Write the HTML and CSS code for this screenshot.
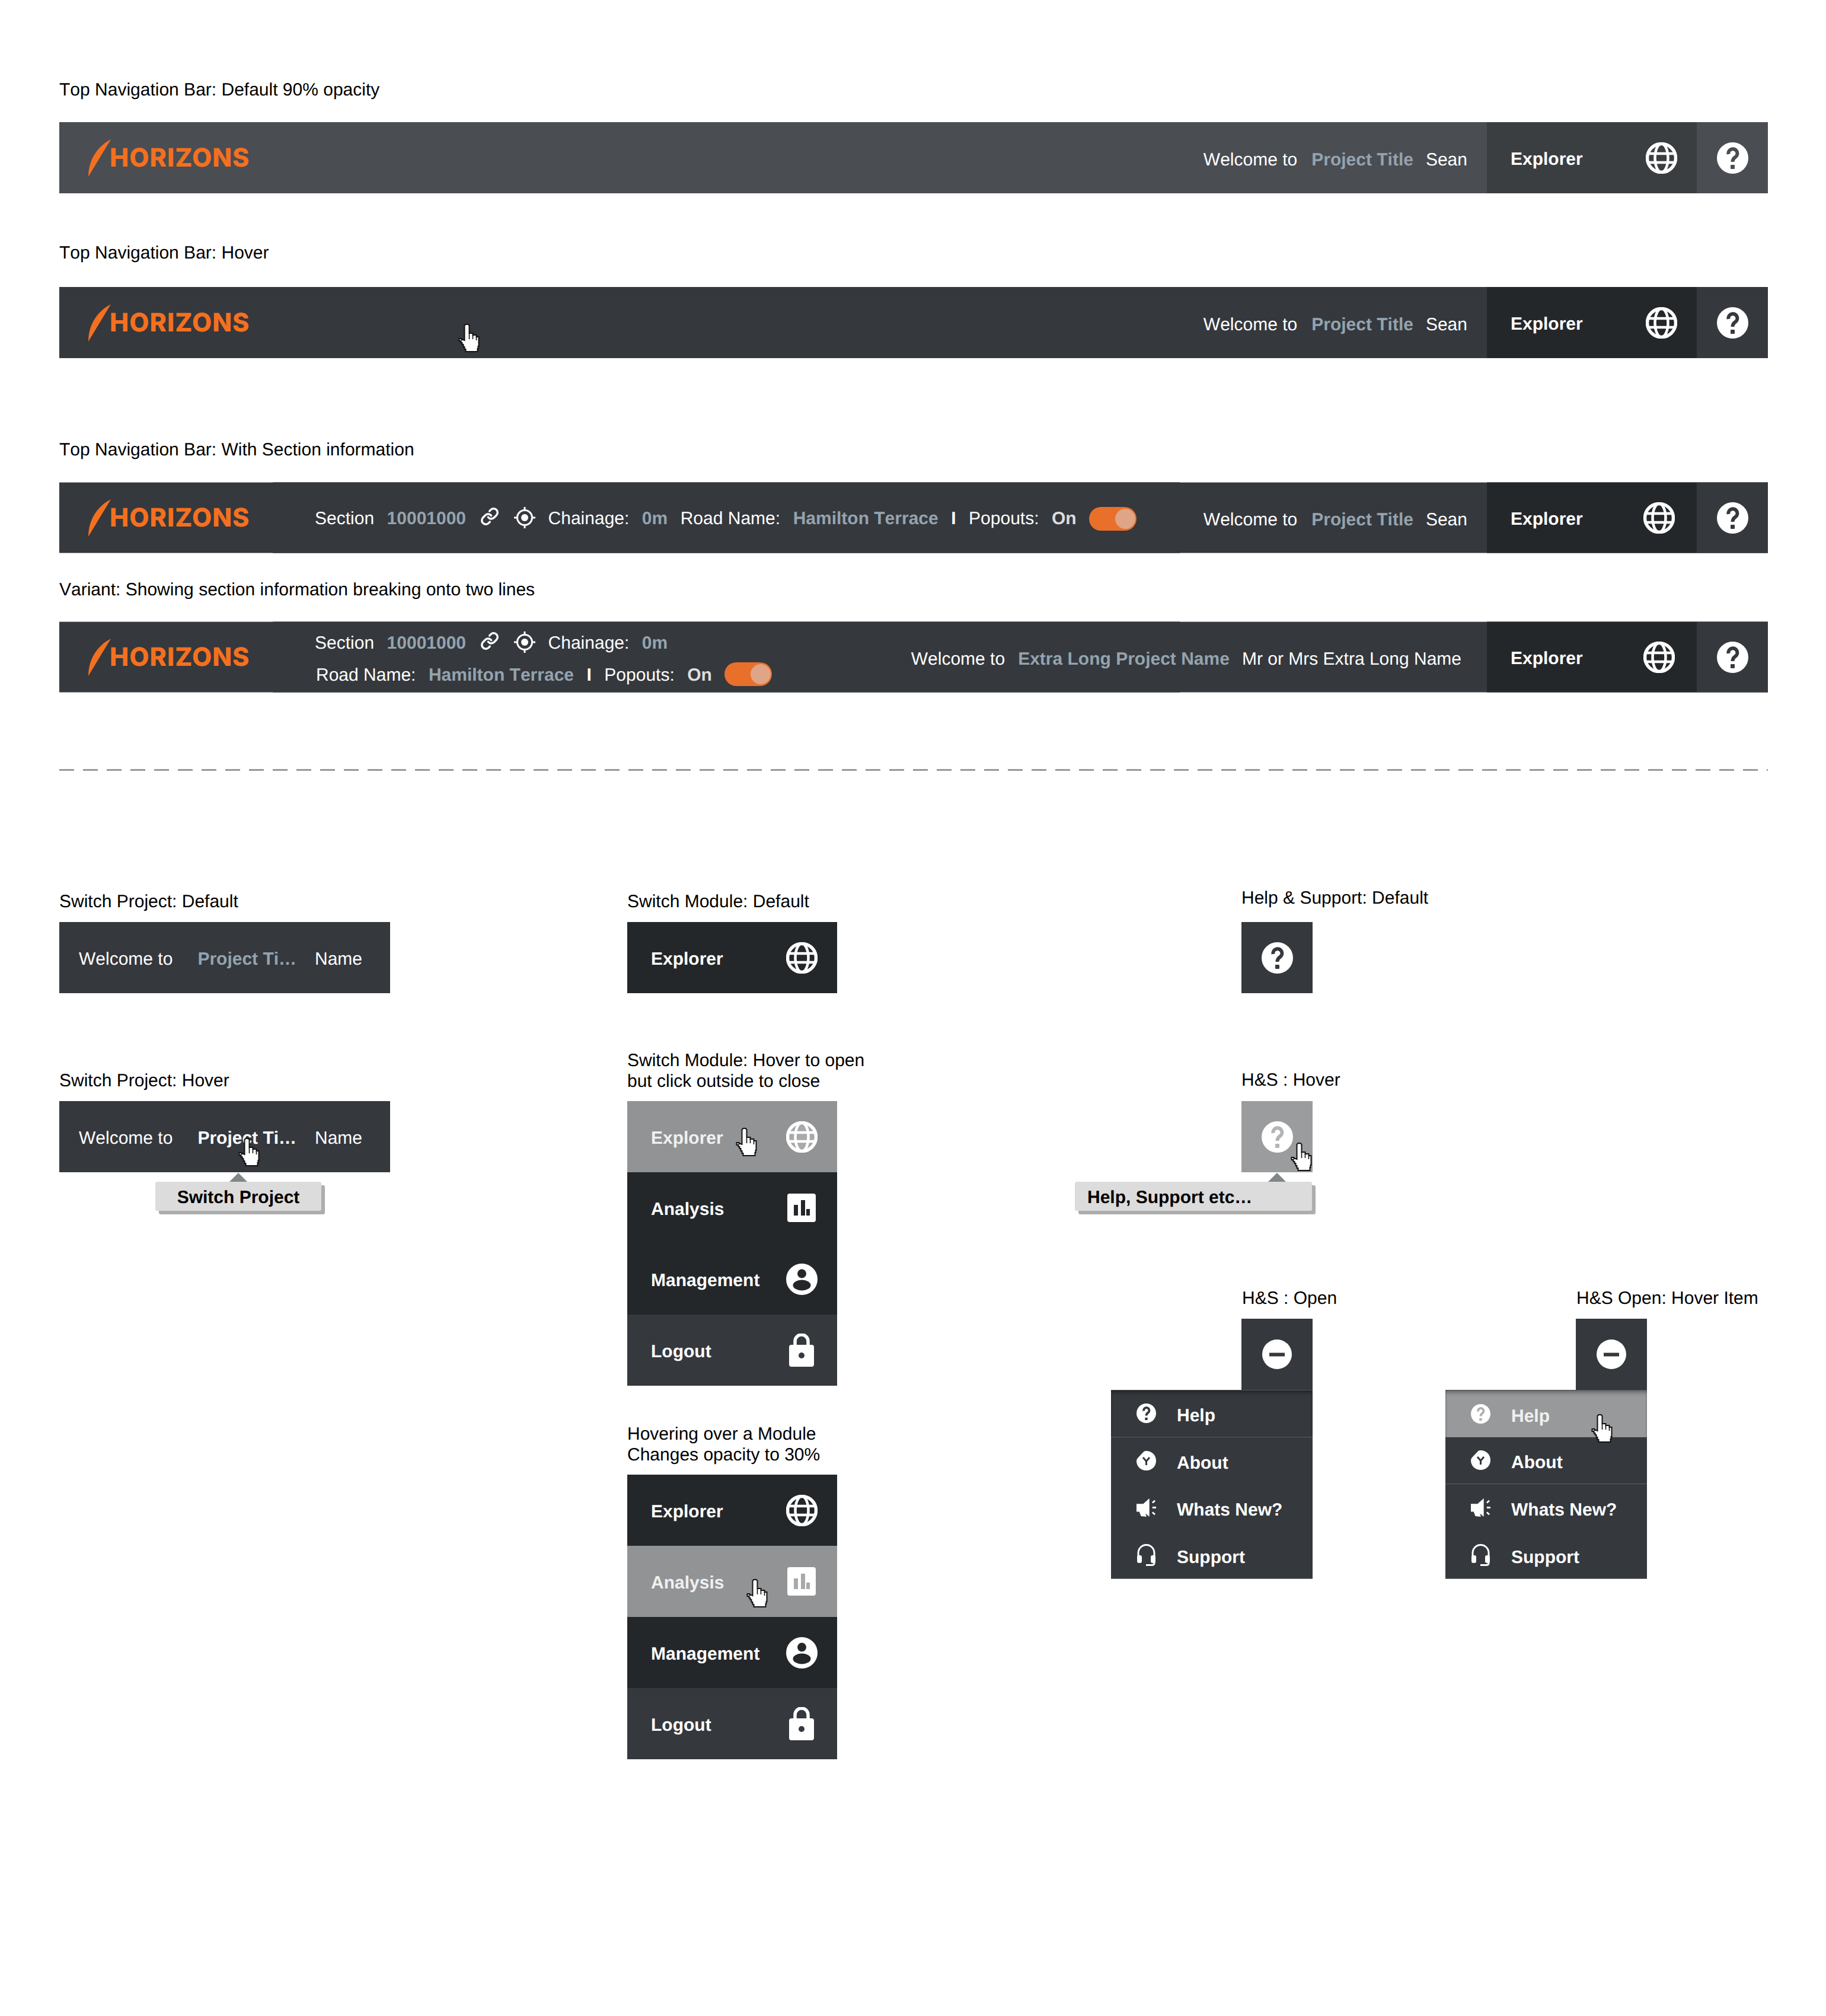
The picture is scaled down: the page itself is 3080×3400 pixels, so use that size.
FILE: index.html
```html
<!DOCTYPE html>
<html lang="en">
<head>
  <meta charset="UTF-8">
  <title>Top Navigation Bar</title>
  <link rel="stylesheet" href="styles.css">
</head>
<body>
  <!-- Shared icons -->
  <svg class="icon-defs" aria-hidden="true">
    <symbol id="i-swoosh" viewBox="0 0 38 63">
      <path d="M38 0C15 12 0 35 0 63Z"/>
    </symbol>
    <symbol id="i-globe" viewBox="0 0 53 53">
      <circle class="hole" cx="26.5" cy="26.5" r="24"/>
      <g class="line line--grid">
        <ellipse cx="26.5" cy="26.5" rx="11" ry="24"/>
        <path d="M4 19H49M4 34H49"/>
      </g>
      <circle class="line" cx="26.5" cy="26.5" r="24"/>
    </symbol>
    <symbol id="i-help" viewBox="0 0 53 53">
      <circle class="solid" cx="26.5" cy="26.5" r="26.5"/>
      <path class="hole-line" d="M19.5 20A7.5 7.5 0 1 1 31 25C28 27 26.5 29 26.5 33"/>
      <rect class="hole" x="23" y="38" width="7" height="7" rx="1"/>
    </symbol>
    <symbol id="i-minus" viewBox="0 0 50 50">
      <circle class="solid" cx="25" cy="25" r="25"/>
      <rect class="hole" x="12" y="22.5" width="26" height="6"/>
    </symbol>
    <symbol id="i-chart" viewBox="0 0 48 48">
      <rect class="solid" width="48" height="48" rx="4"/>
      <rect class="hole" x="11" y="19" width="7" height="18"/>
      <rect class="hole" x="23" y="11" width="7" height="26"/>
      <rect class="hole" x="32" y="26" width="6" height="11"/>
    </symbol>
    <symbol id="i-person" viewBox="0 0 53 53">
      <circle class="solid" cx="26.5" cy="26.5" r="26.5"/>
      <circle class="hole" cx="26.5" cy="17" r="7.5"/>
      <ellipse class="hole" cx="26.5" cy="36.5" rx="15" ry="9"/>
    </symbol>
    <symbol id="i-lock" viewBox="0 0 42 56">
      <path class="line" d="M10 22V13A11 11 0 0 1 32 13V22"/>
      <rect class="solid" y="19" width="42" height="37" rx="4"/>
      <circle class="hole" cx="21" cy="37" r="5"/>
    </symbol>
    <symbol id="i-link" viewBox="0 0 24 24">
      <path class="line line--link" d="M10 13a5 5 0 0 0 7.54.54l3-3a5 5 0 0 0-7.07-7.07l-1.72 1.71"/>
      <path class="line line--link" d="M14 11a5 5 0 0 0-7.54-.54l-3 3a5 5 0 0 0 7.07 7.07l1.71-1.71"/>
    </symbol>
    <symbol id="i-target" viewBox="0 0 36 36">
      <circle class="line line--ring" cx="18" cy="18" r="12.5"/>
      <circle class="solid" cx="18" cy="18" r="6"/>
      <path class="line line--ring" d="M18 0V6M18 30V36M0 18H6M30 18H36"/>
    </symbol>
    <symbol id="i-about" viewBox="0 0 33 33">
      <path class="solid" d="M16 0C26 0 33 7 33 16.5C33 26 26 33 16.5 33C7 33 0 26 0 17C0 15 1 13 3 11L12 1.500C13 .5 15 0 16 0Z"/>
      <path class="hole-line hole-line--thin" d="M11 11L16.500 17.500L22 11M16.500 17.500V24"/>
    </symbol>
    <symbol id="i-megaphone" viewBox="0 0 35 33">
      <path class="solid" d="M0 10H12L23 0V33L16 27L18 33L8 32L5 24H0Z"/>
      <path class="line line--ring" d="M28.500 8L33 4M28.500 16.500H35M28.500 25L33 29"/>
    </symbol>
    <symbol id="i-headset" viewBox="0 0 33 37">
      <path class="line line--ring" d="M3 22V15A13.500 13.500 0 0 1 30 15V32C30 34.500 28 35.500 26 35.500H16"/>
      <rect class="solid" x="1" y="19" width="8" height="13" rx="3"/>
      <rect class="solid" x="24" y="19" width="8" height="13" rx="3"/>
    </symbol>
    <symbol id="i-hand" viewBox="0 0 18 24">
      <path class="hand" d="M6 .5H8L9 1.500V8H12V9.500H15V11H17V19H16.500V21H16V23.500H6V21.500H5V19.500H4V17.500H3V16H2V14.500H.5V12.500H2.500V13.500H4L5 14V1.500Z"/>
      <path class="hand hand--lines" d="M9 8V13M12 9.500V13M15 11V14"/>
    </symbol>
  </svg>

  <div class="board">
    <!-- Top navigation variants -->
    <p class="label label--first">Top Navigation Bar: Default 90% opacity</p>
    <div class="bar bar--default">
      <div class="logo"><svg class="swoosh"><use href="#i-swoosh"/></svg><span class="logo-text">HORIZONS</span></div>
      <div class="welcome">
        <span>Welcome to</span><strong class="accent">Project Title</strong><span>Sean</span>
      </div>
      <div class="module">
        <strong>Explorer</strong>
        <svg class="icon"><use href="#i-globe"/></svg>
      </div>
      <div class="help"><svg class="icon"><use href="#i-help"/></svg></div>
    </div>

    <p class="label label--second">Top Navigation Bar: Hover</p>
    <div class="bar">
      <div class="logo"><svg class="swoosh"><use href="#i-swoosh"/></svg><span class="logo-text">HORIZONS</span></div>
      <div class="welcome">
        <span>Welcome to</span><strong class="accent">Project Title</strong><span>Sean</span>
      </div>
      <div class="module">
        <strong>Explorer</strong>
        <svg class="icon"><use href="#i-globe"/></svg>
      </div>
      <div class="help"><svg class="icon"><use href="#i-help"/></svg></div>
      <svg class="cursor cursor--bar"><use href="#i-hand"/></svg>
    </div>

    <p class="label label--third">Top Navigation Bar: With Section information</p>
    <div class="bar bar--edged">
      <div class="logo"><svg class="swoosh"><use href="#i-swoosh"/></svg><span class="logo-text">HORIZONS</span></div>
      <div class="section-info">
        <div class="section-row">
          <span>Section</span><strong class="accent">10001000</strong>
          <svg class="link-icon"><use href="#i-link"/></svg>
          <svg class="target-icon"><use href="#i-target"/></svg>
          <span>Chainage:</span><strong class="accent">0m</strong>
          <span>Road Name:</span><strong class="accent">Hamilton Terrace</strong>
          <strong class="divider">I</strong>
          <span>Popouts:</span><strong class="state">On</strong>
          <div class="toggle toggle--single"><div class="toggle-knob"></div></div>
        </div>
      </div>
      <div class="welcome">
        <span>Welcome to</span><strong class="accent">Project Title</strong><span>Sean</span>
      </div>
      <div class="module module--tight">
        <strong>Explorer</strong>
        <svg class="icon"><use href="#i-globe"/></svg>
      </div>
      <div class="help"><svg class="icon"><use href="#i-help"/></svg></div>
    </div>

    <p class="label label--fourth">Variant: Showing section information breaking onto two lines</p>
    <div class="bar bar--edged">
      <div class="logo"><svg class="swoosh"><use href="#i-swoosh"/></svg><span class="logo-text">HORIZONS</span></div>
      <div class="section-info section-info--wrap">
        <div class="section-row">
          <span>Section</span><strong class="accent">10001000</strong>
          <svg class="link-icon"><use href="#i-link"/></svg>
          <svg class="target-icon"><use href="#i-target"/></svg>
          <span>Chainage:</span><strong class="accent">0m</strong>
        </div>
        <div class="section-row section-row--second">
          <span>Road Name:</span><strong class="accent">Hamilton Terrace</strong>
          <strong class="divider">I</strong>
          <span>Popouts:</span><strong class="state">On</strong>
          <div class="toggle"><div class="toggle-knob"></div></div>
        </div>
      </div>
      <div class="welcome welcome--long">
        <span>Welcome to</span><strong class="accent">Extra Long Project Name</strong><span>Mr or Mrs Extra Long Name</span>
      </div>
      <div class="module module--tight">
        <strong>Explorer</strong>
        <svg class="icon"><use href="#i-globe"/></svg>
      </div>
      <div class="help"><svg class="icon"><use href="#i-help"/></svg></div>
    </div>

    <div class="dashed"></div>

    <!-- Component states -->
    <div class="states">
      <div class="col col--project">
        <p class="label label--col">Switch Project: Default</p>
        <div class="project-bar">
          <span>Welcome to</span><strong class="accent project-name">Project Ti…</strong><span class="project-user">Name</span>
        </div>

        <p class="label label--project-hover">Switch Project: Hover</p>
        <div class="project-bar">
          <span>Welcome to</span><strong class="project-name">Project Ti…</strong><span class="project-user">Name</span>
          <svg class="cursor cursor--project"><use href="#i-hand"/></svg>
          <div class="tip tip--project"><span class="tip-arrow"></span>Switch Project</div>
        </div>
      </div>

      <div class="col col--module">
        <p class="label label--col">Switch Module: Default</p>
        <div class="module module--solo">
          <strong>Explorer</strong>
          <svg class="icon"><use href="#i-globe"/></svg>
        </div>

        <p class="label label--module-open">Switch Module: Hover to open<br>but click outside to close</p>
        <div class="module-list">
          <div class="module module--solo module--hover">
            <strong>Explorer</strong>
            <svg class="icon"><use href="#i-globe"/></svg>
            <svg class="cursor cursor--explorer"><use href="#i-hand"/></svg>
          </div>
          <div class="module module--solo">
            <strong>Analysis</strong>
            <svg class="icon icon--chart"><use href="#i-chart"/></svg>
          </div>
          <div class="module module--solo">
            <strong>Management</strong>
            <svg class="icon"><use href="#i-person"/></svg>
          </div>
          <div class="module module--solo module--logout">
            <strong>Logout</strong>
            <svg class="icon icon--lock"><use href="#i-lock"/></svg>
          </div>
        </div>

        <p class="label label--module-item">Hovering over a Module<br>Changes opacity to 30%</p>
        <div class="module-list">
          <div class="module module--solo">
            <strong>Explorer</strong>
            <svg class="icon"><use href="#i-globe"/></svg>
          </div>
          <div class="module module--solo module--hover">
            <strong>Analysis</strong>
            <svg class="icon icon--chart"><use href="#i-chart"/></svg>
            <svg class="cursor cursor--analysis"><use href="#i-hand"/></svg>
          </div>
          <div class="module module--solo">
            <strong>Management</strong>
            <svg class="icon"><use href="#i-person"/></svg>
          </div>
          <div class="module module--solo module--logout">
            <strong>Logout</strong>
            <svg class="icon icon--lock"><use href="#i-lock"/></svg>
          </div>
        </div>
      </div>

      <div class="col col--help">
        <div class="help-stack">
          <p class="label label--help-default">Help &amp; Support: Default</p>
          <div class="help help--solo"><svg class="icon"><use href="#i-help"/></svg></div>

          <p class="label label--help-hover">H&amp;S : Hover</p>
          <div class="help help--solo help--hover">
            <svg class="icon"><use href="#i-help"/></svg>
            <svg class="cursor cursor--help"><use href="#i-hand"/></svg>
            <div class="tip tip--help"><span class="tip-arrow"></span>Help, Support etc…</div>
          </div>
        </div>

        <div class="help-open-row">
          <div class="help-open">
            <p class="label label--open">H&amp;S : Open</p>
            <div class="help help--solo help--open"><svg class="icon icon--minus"><use href="#i-minus"/></svg></div>
            <div class="menu">
              <div class="menu-item menu-item--first menu-item--ruled"><svg class="menu-icon"><use href="#i-help"/></svg><strong>Help</strong></div>
              <div class="menu-item"><svg class="menu-icon"><use href="#i-about"/></svg><strong>About</strong></div>
              <div class="menu-item"><svg class="menu-icon"><use href="#i-megaphone"/></svg><strong>Whats New?</strong></div>
              <div class="menu-item"><svg class="menu-icon menu-icon--tall"><use href="#i-headset"/></svg><strong>Support</strong></div>
            </div>
          </div>

          <div class="help-open">
            <p class="label label--open">H&amp;S Open: Hover Item</p>
            <div class="help help--solo help--open"><svg class="icon icon--minus"><use href="#i-minus"/></svg></div>
            <div class="menu">
              <div class="menu-item menu-item--first menu-item--hover"><svg class="menu-icon"><use href="#i-help"/></svg><strong>Help</strong></div>
              <div class="menu-item menu-item--ruled"><svg class="menu-icon"><use href="#i-about"/></svg><strong>About</strong></div>
              <div class="menu-item"><svg class="menu-icon"><use href="#i-megaphone"/></svg><strong>Whats New?</strong></div>
              <div class="menu-item"><svg class="menu-icon menu-icon--tall"><use href="#i-headset"/></svg><strong>Support</strong></div>
              <svg class="cursor cursor--menu"><use href="#i-hand"/></svg>
            </div>
          </div>
        </div>
      </div>
    </div>
  </div>
</body>
</html>
```

FILE: styles.css
```css
/* Specimen board for the top navigation */
html, body {
  margin: 0;
  padding: 0;
  background: #fff;
}
body {
  font-family: "Liberation Sans", Arial, sans-serif;
  font-size: 30px;
  line-height: 35px;
  color: #000;
  font-kerning: none;
  text-rendering: geometricPrecision;
  --hole: #35383d;
}
.board {
  width: 2882px;
  height: 3400px;
  padding-left: 100px;
  overflow: hidden;
}
.icon-defs {
  position: absolute;
  width: 0;
  height: 0;
}

/* Icon parts, styled through the <use> tree */
.solid { fill: #fff; }
.hole { fill: var(--hole); }
.hole-line {
  fill: none;
  stroke: var(--hole);
  stroke-width: 6;
}
.hole-line--thin { stroke-width: 3; }
.line {
  fill: none;
  stroke: #fff;
  stroke-width: 5.5;
}
.line--grid { stroke-width: 4.5; }
.line--link { stroke-width: 2.6; stroke-linecap: round; }
.line--ring { stroke-width: 3; }
.hand {
  fill: #fff;
  stroke: #111;
  stroke-width: 1;
}
.hand--lines { fill: none; stroke-width: .8; }

/* Labels */
.label {
  margin: 0;
  padding-top: 1.5px;
  white-space: nowrap;
}
.label--first { padding-top: 133.5px; margin-bottom: 37.5px; }
.label--second { margin-top: 81px; margin-bottom: 40.5px; }
.label--third { margin-top: 135px; margin-bottom: 37.5px; }
.label--fourth { margin-top: 42px; margin-bottom: 36.5px; }
.label--col { margin-top: 6px; margin-bottom: 17.5px; }
.label--project-hover { margin-top: 128px; margin-bottom: 17.5px; }
.label--module-open { margin-top: 94px; margin-bottom: 16.5px; }
.label--module-item { margin-top: 62px; margin-bottom: 16.5px; }
.label--help-default { margin-bottom: 23.5px; }
.label--help-hover { margin-top: 127px; margin-bottom: 18.5px; }
.label--open { margin-left: 221px; margin-bottom: 17.5px; }

/* Navigation bar */
.bar {
  position: relative;
  display: flex;
  align-items: center;
  height: 120px;
  background: #35383d;
  color: #fff;
  --hole: #35383d;
}
.bar--default {
  background: #4a4d52;
  --hole: #4a4d52;
}
.bar--default .module {
  background: #3b3e41;
  --hole: #3b3e41;
}
.bar--edged {
  box-sizing: border-box;
  background:
    linear-gradient(to right, #b5b5b5 360px, #6e6e6e 360px, #6e6e6e 1890px, #b5b5b5 1890px, #b5b5b5 2408px, #6e6e6e 2408px) top / 100% 1px no-repeat,
    linear-gradient(to right, #8a8a8a 360px, #4a4c50 360px, #4a4c50 1890px, #8a8a8a 1890px, #8a8a8a 2408px, #4a4c50 2408px) bottom / 100% 1px no-repeat,
    #35383d;
}
.bar--edged .module,
.bar--edged .help {
  align-self: stretch;
  height: auto;
  border-top: 1px solid #6e6e6e;
  border-bottom: 1px solid #4a4c50;
}
.logo {
  display: flex;
  align-items: center;
  padding-left: 49px;
}
.swoosh {
  width: 38px;
  height: 63px;
  fill: #f4701f;
}
.logo-text {
  margin-left: -2px;
  color: #f4701f;
  font-family: Inter, "Liberation Sans", sans-serif;
  font-size: 43px;
  font-weight: 800;
  font-kerning: normal;
  letter-spacing: 1px;
  line-height: 43px;
}
.accent { color: #94a3ae; }
.welcome {
  display: flex;
  gap: 21px;
  margin-left: auto;
  padding: 6px 33px 0 0;
  white-space: nowrap;
}
.welcome .accent { margin-left: 3px; }
.welcome--long { padding-right: 43px; }
.welcome--long .accent { margin-left: 1px; }
.module {
  box-sizing: border-box;
  display: flex;
  flex: none;
  align-items: center;
  justify-content: space-between;
  width: 354px;
  height: 120px;
  padding: 0 33px 0 40px;
  background: #24272a;
  color: #fff;
  --hole: #24272a;
}
.module strong { padding-top: 5px; }
.module--tight { padding-right: 37px; }
.help {
  display: flex;
  flex: none;
  align-items: center;
  justify-content: center;
  width: 120px;
  height: 120px;
}
.icon {
  display: block;
  flex: none;
  width: 53px;
  height: 53px;
}
.icon--chart { width: 48px; height: 48px; margin-right: 3px; }
.icon--lock { width: 42px; height: 56px; margin-right: 6px; }
.icon--minus { width: 50px; height: 50px; }

/* Section information */
.section-info {
  position: absolute;
  left: 431px;
  top: 0;
  bottom: 0;
  display: flex;
  flex-direction: column;
  justify-content: center;
  gap: 14px;
  white-space: nowrap;
}
.section-info--wrap { padding-top: 4px; }
.section-row {
  display: flex;
  align-items: center;
  gap: 21.500px;
  height: 40px;
}
.section-row > span,
.section-row > strong { padding-top: 2px; }
.section-row--second { padding-left: 2px; }
.link-icon {
  width: 32px;
  height: 32px;
  margin: -4px 4px 0 2px;
}
.target-icon {
  width: 36px;
  height: 36px;
}
.divider { color: #fff; }
.state { color: #ddd; }
.toggle {
  position: relative;
  flex: none;
  width: 80px;
  height: 40px;
  border-radius: 20px;
  background: #e8702a;
}
.toggle--single { margin-top: 4px; }
.toggle-knob {
  position: absolute;
  right: 2px;
  top: 3px;
  width: 34px;
  height: 34px;
  border-radius: 50%;
  background: #e0a486;
}
.dashed {
  height: 3px;
  margin-top: 129px;
  background: repeating-linear-gradient(to right, #999 0, #999 25px, transparent 25px, transparent 40px);
}

/* Lower columns */
.states {
  display: flex;
  margin-top: 195px;
}
.col { flex: none; }
.col--project { width: 958px; }
.col--module { width: 755px; }
.project-bar {
  position: relative;
  box-sizing: border-box;
  display: flex;
  align-items: center;
  width: 558px;
  height: 120px;
  padding: 5px 0 0 33px;
  background: #35383d;
  color: #fff;
  white-space: nowrap;
}
.project-name { margin-left: 42px; }
.project-user { position: absolute; left: 431px; }
.module--solo { position: relative; }
.module--hover {
  background: #929395;
  color: #f0f0f0;
  --hole: #a8a9ab;
}
.module--logout {
  background: #35383d;
  --hole: #35383d;
}

/* Help and support */
.help-stack { margin-left: 281px; }
.help--solo {
  position: relative;
  background: #35383d;
}
.help--hover {
  background: #9b9c9e;
  --hole: #b3b4b5;
}
.help-open-row {
  display: flex;
  gap: 224px;
  margin: 193px 0 0 61px;
}
.help-open { width: 340px; }
.help--open {
  margin-left: 220px;
}
.menu {
  position: relative;
  width: 340px;
  border-bottom: 1px solid #77797c;
  background: #35383d;
  color: #fff;
}
.menu-item {
  box-sizing: border-box;
  display: flex;
  align-items: center;
  gap: 35px;
  height: 79.5px;
  padding-left: 43px;
}
.menu-item strong { padding-top: 8px; }
.menu-item--first {
  border-top: 1px solid #55575b;
  box-shadow: inset 0 8px 8px -6px rgba(0, 0, 0, .45), inset 2px 0 3px -1px rgba(0, 0, 0, .2), inset -2px 0 3px -1px rgba(0, 0, 0, .2);
}
.menu-item--ruled { border-bottom: 1px solid #5b5e62; }
.menu-item--hover {
  background: #98999b;
  color: #f0f0f0;
  --hole: #aeafb0;
}
.menu-icon {
  flex: none;
  width: 33px;
  height: 33px;
}
.menu-icon--tall { height: 37px; }

/* Tooltips */
.tip {
  position: absolute;
  top: 136px;
  box-sizing: border-box;
  height: 49px;
  border-radius: 3px;
  background: #dcdcdc;
  box-shadow: 6px 6px 0 #adadad;
  color: #000;
  font-weight: bold;
  line-height: 53px;
  white-space: nowrap;
}
.tip--project {
  left: 162px;
  width: 280px;
  text-align: center;
}
.tip--help {
  left: -281px;
  width: 400px;
  padding-left: 21px;
}
.tip-arrow {
  position: absolute;
  top: -15px;
  width: 0;
  height: 0;
  border-left: 15px solid transparent;
  border-right: 15px solid transparent;
  border-bottom: 15px solid #7f8787;
}
.tip--project .tip-arrow { left: 125px; }
.tip--help .tip-arrow { left: 326px; }

/* Hand cursors lie over the component they point at */
.cursor {
  position: absolute;
  z-index: 2;
  width: 37px;
  height: 48px;
}
.cursor--bar { left: 673px; top: 62px; }
.cursor--project { left: 302px; top: 62px; }
.cursor--explorer { left: 183px; top: 45px; }
.cursor--analysis { left: 201px; top: 56px; }
.cursor--help { left: 83px; top: 70px; }
.cursor--menu { left: 246px; top: 41px; }
```
